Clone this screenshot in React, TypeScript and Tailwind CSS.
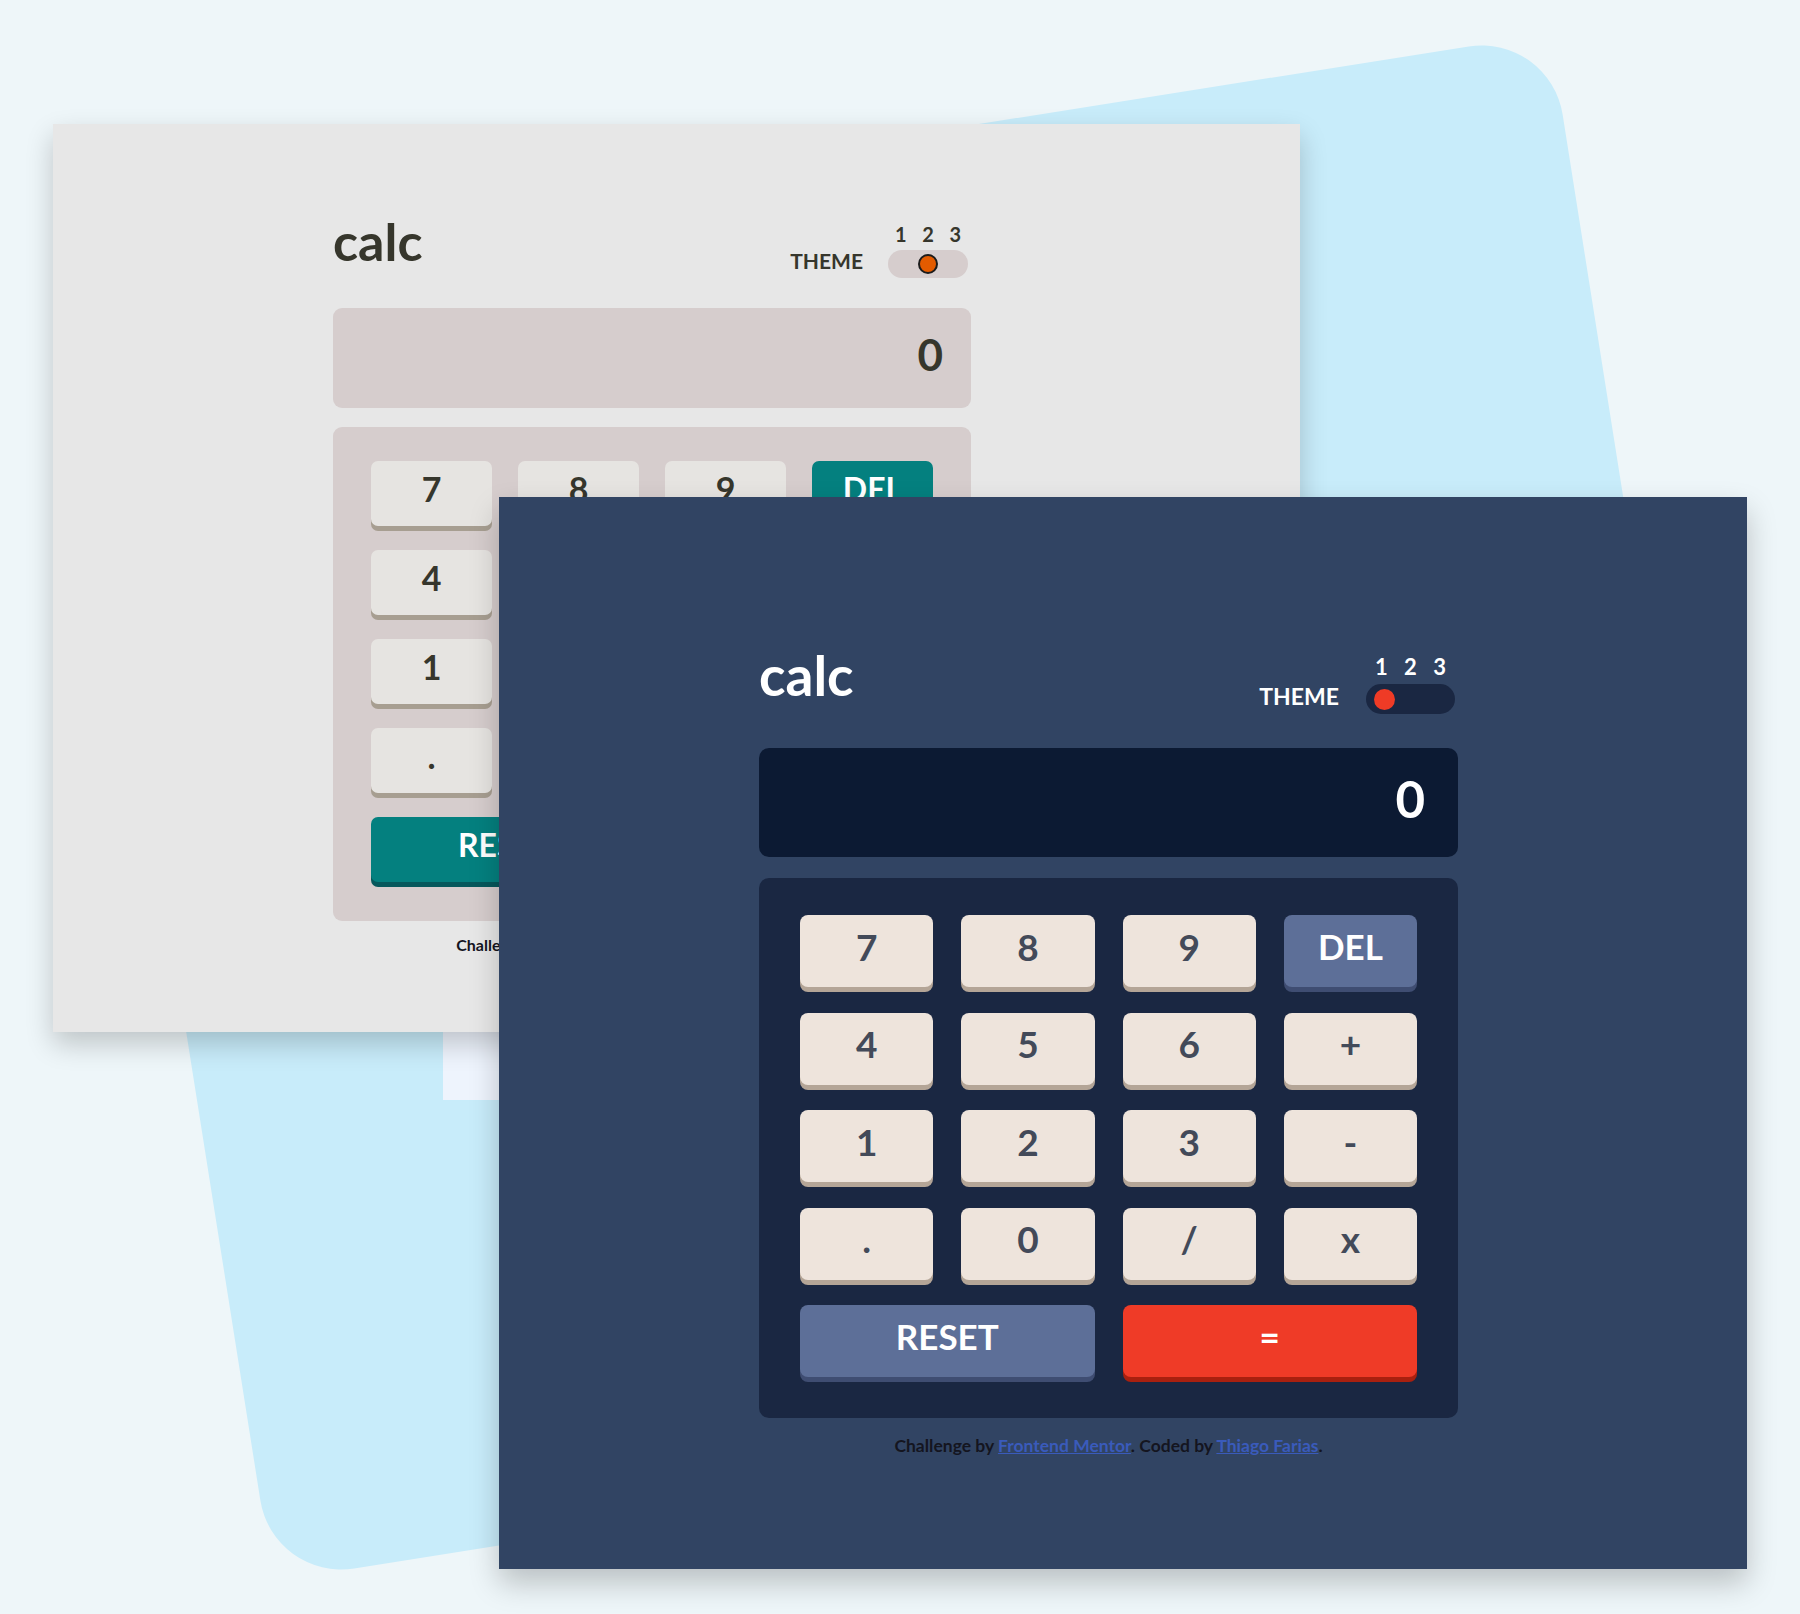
import React from "react";

type Theme = {
  win: string;
  content: string;
  title: string;
  group: string;
  themeLabel: string;
  nums: string;
  toggle: string;
  dot: string;
  display: string;
  displayText: string;
  keypad: string;
  key: string;
  num: string;
  fn: string;
  eq: string;
  footer: string;
  link: string;
};

const dark: Theme = {
  win: "left-[499px] top-[497px] w-[1248px] h-[1072px] bg-[#314463] shadow-[0_14px_28px_rgba(0,0,0,0.22)] z-30",
  content: "ml-[260px] w-[699px] pt-[151px]",
  title: "text-[55px] mb-[11px] text-white",
  group: "gap-[27px] mr-[3px]",
  themeLabel: "text-[23px] mb-[6px] text-white",
  nums: "text-[22px] text-white px-[9px] mb-[6px]",
  toggle: "w-[89px] h-[30px] bg-[#1a2742] justify-start",
  dot: "w-[21px] h-[21px] ml-[8px] bg-[#ef3b26]",
  display: "mt-[34px] h-[109px] rounded-[10px] bg-[#0c1a33] pr-[33px] pb-[8px]",
  displayText: "text-[51px] text-white",
  keypad:
    "mt-[21px] rounded-[10px] bg-[#1a2742] px-[41px] pt-[37px] pb-[41px] gap-x-[28px] gap-y-[25.5px]",
  key: "h-[72px] rounded-[8px] pb-[10px]",
  num: "bg-[#eee4dc] shadow-[0_5px_0_#b4a597] text-[#434a59] text-[37px]",
  fn: "bg-[#5d6f98] shadow-[0_5px_0_#3f4d72] text-white text-[35px]",
  eq: "bg-[#ef3b27] shadow-[0_5px_0_#a9200f] text-white text-[35px]",
  footer: "mt-[18px] text-[17.5px] leading-[20px] text-[#14151f]",
  link: "text-[#3a5bbb] underline",
};

const light: Theme = {
  win: "left-[53px] top-[124px] w-[1247px] h-[908px] bg-[#e7e7e7] shadow-[0_12px_26px_rgba(0,0,0,0.2)] z-20",
  content: "ml-[280px] w-[638px] pt-[91px]",
  title: "text-[52px] mb-[11px] text-[#36362c]",
  group: "gap-[25px] mr-[3px]",
  themeLabel: "text-[21px] mb-[7px] text-[#36362c]",
  nums: "text-[20px] text-[#36362c] px-[7px] mb-[6px]",
  toggle: "w-[80px] h-[28px] bg-[#d6cdcd] justify-center",
  dot: "w-[20px] h-[20px] bg-[#e35b00] border-2 border-[#1b1b1b]",
  display: "mt-[30px] h-[100px] rounded-[9px] bg-[#d6cdcd] pr-[28px] pb-[8px]",
  displayText: "text-[44px] text-[#36362c]",
  keypad:
    "mt-[19px] rounded-[9px] bg-[#d6cdcd] px-[38px] pt-[34px] pb-[39px] gap-x-[26px] gap-y-[24px]",
  key: "h-[65px] rounded-[7px] pb-[9px]",
  num: "bg-[#e6e4e1] shadow-[0_5px_0_#a79e91] text-[#36362c] text-[34px]",
  fn: "bg-[#04807f] shadow-[0_5px_0_#06585c] text-white text-[32px]",
  eq: "bg-[#c85402] shadow-[0_5px_0_#873901] text-white text-[32px]",
  footer: "mt-[15px] text-[16px] leading-[18px] text-[#14151f]",
  link: "text-[#3a5bbb] underline",
};

const keys: { label: string; kind: "num" | "fn" | "eq"; wide?: boolean }[] = [
  { label: "7", kind: "num" },
  { label: "8", kind: "num" },
  { label: "9", kind: "num" },
  { label: "DEL", kind: "fn" },
  { label: "4", kind: "num" },
  { label: "5", kind: "num" },
  { label: "6", kind: "num" },
  { label: "+", kind: "num" },
  { label: "1", kind: "num" },
  { label: "2", kind: "num" },
  { label: "3", kind: "num" },
  { label: "-", kind: "num" },
  { label: ".", kind: "num" },
  { label: "0", kind: "num" },
  { label: "/", kind: "num" },
  { label: "x", kind: "num" },
  { label: "RESET", kind: "fn", wide: true },
  { label: "=", kind: "eq", wide: true },
];

function Calculator({ t }: { t: Theme }) {
  return (
    <div className={`absolute overflow-hidden ${t.win}`}>
      <div className={`flex flex-col ${t.content}`}>
        <header className="flex items-end justify-between">
          <h1 className={`font-bold leading-none ${t.title}`}>calc</h1>
          <div className={`flex items-end ${t.group}`}>
            <span className={`font-bold leading-none ${t.themeLabel}`}>THEME</span>
            <div className="flex flex-col">
              <div className={`flex justify-between font-bold leading-none ${t.nums}`}>
                <span>1</span>
                <span>2</span>
                <span>3</span>
              </div>
              <div className={`flex items-center rounded-full ${t.toggle}`}>
                <div className={`rounded-full ${t.dot}`} />
              </div>
            </div>
          </div>
        </header>
        <div className={`flex items-center justify-end ${t.display}`}>
          <span className={`font-bold leading-none ${t.displayText}`}>0</span>
        </div>
        <div className={`grid grid-cols-4 ${t.keypad}`}>
          {keys.map((k) => (
            <div
              key={k.label}
              className={`flex items-center justify-center font-bold leading-none ${t.key} ${
                k.kind === "num" ? t.num : k.kind === "fn" ? t.fn : t.eq
              } ${k.wide ? "col-span-2" : ""}`}
            >
              {k.label}
            </div>
          ))}
        </div>
        <p className={`text-center font-bold ${t.footer}`}>
          Challenge by <span className={t.link}>Frontend Mentor</span>. Coded by{" "}
          <span className={t.link}>Thiago Farias</span>.
        </p>
      </div>
    </div>
  );
}

export default function App() {
  return (
    <div className="relative w-[1800px] h-[1614px] overflow-hidden bg-[#eef6f9] font-['Lato','Open_Sans',sans-serif]">
      <div className="absolute left-[160px] top-[143px] w-[1503px] h-[1329px] rounded-[82px] bg-[#c8ecfa] rotate-[-9deg] z-0" />
      <div className="absolute left-[443px] top-[560px] w-[900px] h-[540px] bg-[#eef4fd] z-10" />
      <Calculator t={light} />
      <Calculator t={dark} />
    </div>
  );
}
